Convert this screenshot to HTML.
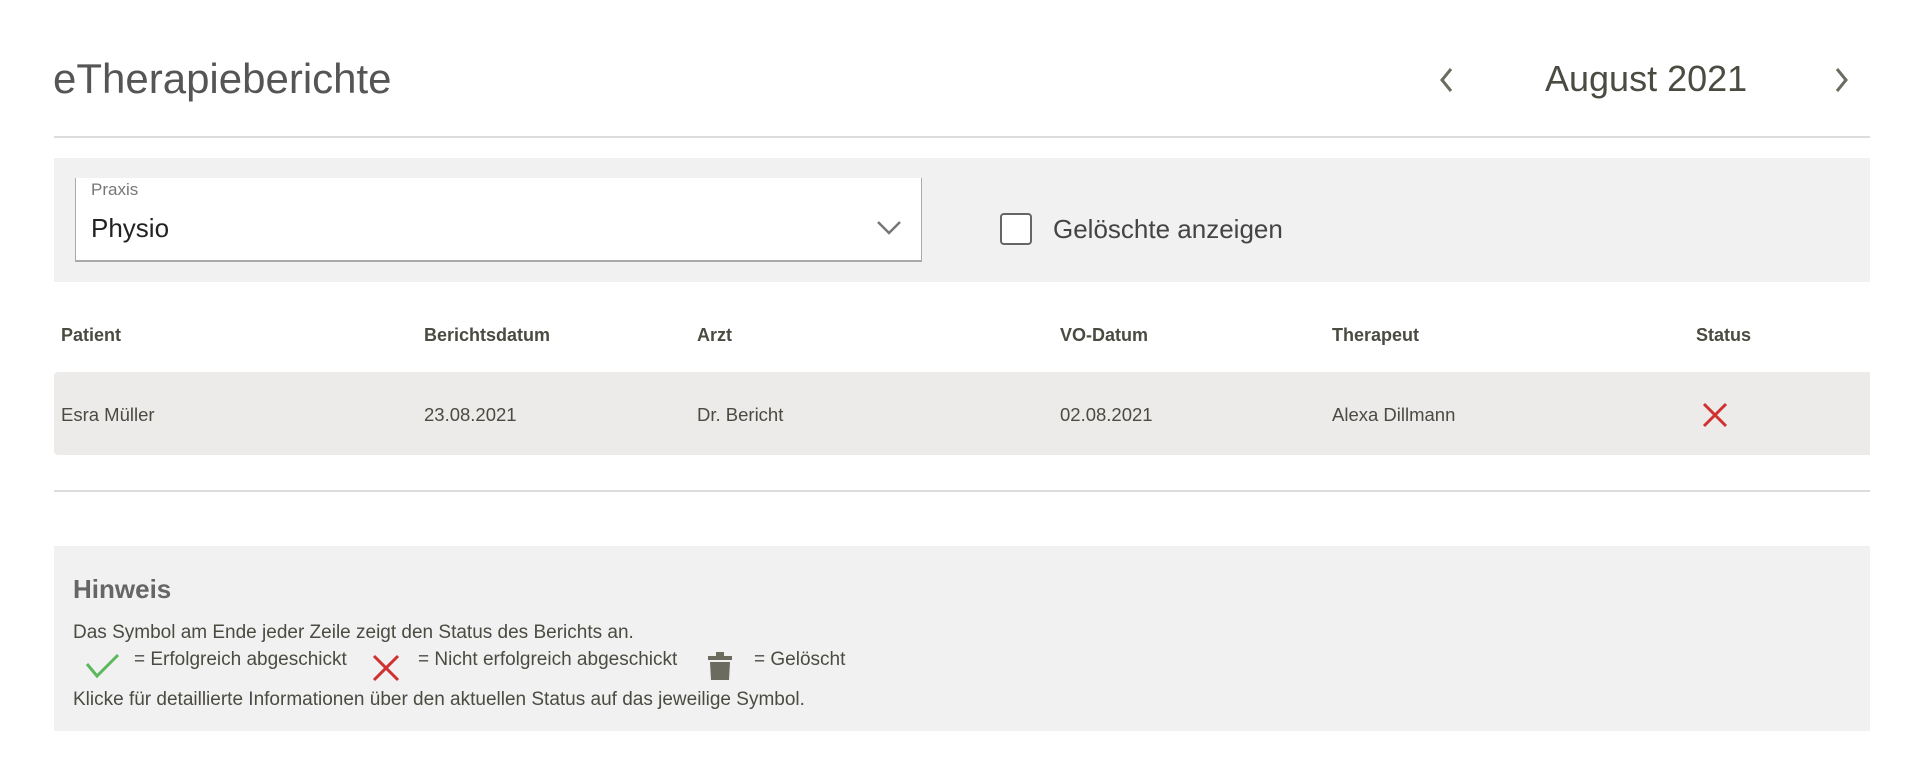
<!DOCTYPE html>
<html><head><meta charset="utf-8"><style>
body{margin:0;width:1906px;height:772px;background:#fff;font-family:"Liberation Sans",sans-serif;color:#4b4b42;position:relative;overflow:hidden}
.a{position:absolute;white-space:nowrap}
</style></head><body>
<div class="a" style="left:53px;top:55px;font-size:42px;font-weight:300;color:#555;letter-spacing:0px">eTherapieberichte</div>
<svg class="a" style="left:1437px;top:66px" width="20" height="28"><path d="M14 3 L5 14 L14 25" stroke="#6b6b60" stroke-width="3" fill="none"/></svg>
<div class="a" style="left:1545px;top:58px;font-size:36px;color:#4b4b42;width:200px;text-align:center">August 2021</div>
<svg class="a" style="left:1832px;top:66px" width="20" height="28"><path d="M5 3 L14 14 L5 25" stroke="#6b6b60" stroke-width="3" fill="none"/></svg>
<div class="a" style="left:54px;top:136px;width:1816px;height:2px;background:#dcdcdc"></div>
<div class="a" style="left:54px;top:158px;width:1816px;height:124px;background:#f1f1f1"></div>
<div class="a" style="left:75px;top:178px;width:845px;height:82px;background:#fff;border:1px solid #aaa;border-top:none;border-bottom:2px solid #aaa"></div>
<div class="a" style="left:91px;top:180px;font-size:17px;color:#777">Praxis</div>
<div class="a" style="left:91px;top:213px;font-size:26px;color:#222">Physio</div>
<svg class="a" style="left:876px;top:219px" width="26" height="18"><path d="M2 3 L13 14 L24 3" stroke="#777" stroke-width="2.5" fill="none"/></svg>
<div class="a" style="left:1000px;top:213px;width:28px;height:28px;border:2px solid #666;border-radius:4px;background:#fff"></div>
<div class="a" style="left:1053px;top:214px;font-size:26px;color:#444">Gelöschte anzeigen</div>
<div class="a" style="left:61px;top:325px;font-size:18px;font-weight:bold;color:#4b4b42">Patient</div>
<div class="a" style="left:424px;top:325px;font-size:18px;font-weight:bold;color:#4b4b42">Berichtsdatum</div>
<div class="a" style="left:697px;top:325px;font-size:18px;font-weight:bold;color:#4b4b42">Arzt</div>
<div class="a" style="left:1060px;top:325px;font-size:18px;font-weight:bold;color:#4b4b42">VO-Datum</div>
<div class="a" style="left:1332px;top:325px;font-size:18px;font-weight:bold;color:#4b4b42">Therapeut</div>
<div class="a" style="left:1696px;top:325px;font-size:18px;font-weight:bold;color:#4b4b42">Status</div>
<div class="a" style="left:54px;top:372px;width:1816px;height:83px;background:#ecebe9;border-radius:4px 0 0 4px"></div>
<div class="a" style="left:61px;top:404px;font-size:18.5px">Esra Müller</div>
<div class="a" style="left:424px;top:404px;font-size:18.5px">23.08.2021</div>
<div class="a" style="left:697px;top:404px;font-size:18.5px">Dr. Bericht</div>
<div class="a" style="left:1060px;top:404px;font-size:18.5px">02.08.2021</div>
<div class="a" style="left:1332px;top:404px;font-size:18.5px">Alexa Dillmann</div>
<svg class="a" style="left:1702px;top:402px" width="26" height="26"><path d="M2 2 L24 24 M24 2 L2 24" stroke="#d03030" stroke-width="3"/></svg>
<div class="a" style="left:54px;top:490px;width:1816px;height:2px;background:#dcdcdc"></div>
<div class="a" style="left:54px;top:546px;width:1816px;height:185px;background:#f1f1f1"></div>
<div class="a" style="left:73px;top:574px;font-size:26px;font-weight:bold;color:#666">Hinweis</div>
<div class="a" style="left:73px;top:622px;font-size:19px">Das Symbol am Ende jeder Zeile zeigt den Status des Berichts an.</div>
<svg class="a" style="left:85px;top:652px" width="36" height="28"><path d="M2 12 L12 24 L33 3" stroke="#5cb85c" stroke-width="3" fill="none"/></svg>
<div class="a" style="left:134px;top:649px;font-size:19px">= Erfolgreich abgeschickt</div>
<svg class="a" style="left:372px;top:654px" width="28" height="28"><path d="M2 2 L26 26 M26 2 L2 26" stroke="#d03030" stroke-width="3"/></svg>
<div class="a" style="left:418px;top:649px;font-size:19px">= Nicht erfolgreich abgeschickt</div>
<svg class="a" style="left:706px;top:651px" width="28" height="30"><rect x="2" y="5" width="24" height="4" fill="#6b6b60"/><rect x="10" y="1" width="8" height="5" fill="#6b6b60"/><path d="M4 11 H24 L23 29 H5 Z" fill="#6b6b60"/></svg>
<div class="a" style="left:754px;top:649px;font-size:19px">= Gelöscht</div>
<div class="a" style="left:73px;top:689px;font-size:19px">Klicke für detaillierte Informationen über den aktuellen Status auf das jeweilige Symbol.</div>
</body></html>
